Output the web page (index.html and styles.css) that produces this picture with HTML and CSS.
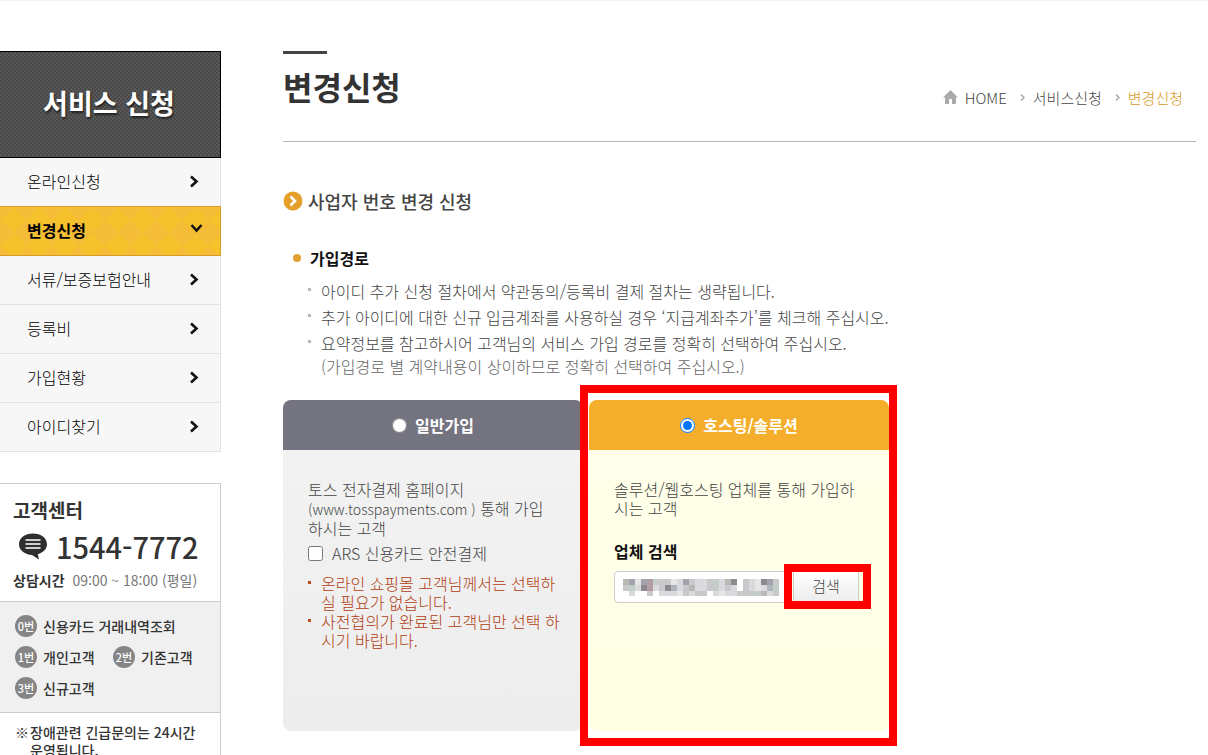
FILE: index.html
```html
<!DOCTYPE html>
<html lang="ko">
<head>
    <meta charset="UTF-8">
    <meta name="viewport" content="width=device-width, initial-scale=1.0">
    <title>변경신청</title>
    <link rel="stylesheet" href="styles.css">
</head>
<body>
    <div class="page">
        <aside class="sidebar">
            <h2 class="side-title">서비스 신청</h2>
            <nav>
                <ul class="side-menu">
                    <li><a href="#">온라인신청 <svg width="9" height="13" viewBox="0 0 9 13"><path d="M1 1.5L6.5 6.5L1 11.5"/></svg></a></li>
                    <li class="active"><a href="#">변경신청 <svg class="down" width="13" height="9" viewBox="0 0 13 9"><path d="M1.5 1L6.5 6.5L11.5 1"/></svg></a></li>
                    <li><a href="#">서류/보증보험안내 <svg width="9" height="13" viewBox="0 0 9 13"><path d="M1 1.5L6.5 6.5L1 11.5"/></svg></a></li>
                    <li><a href="#">등록비 <svg width="9" height="13" viewBox="0 0 9 13"><path d="M1 1.5L6.5 6.5L1 11.5"/></svg></a></li>
                    <li><a href="#">가입현황 <svg width="9" height="13" viewBox="0 0 9 13"><path d="M1 1.5L6.5 6.5L1 11.5"/></svg></a></li>
                    <li><a href="#">아이디찾기 <svg width="9" height="13" viewBox="0 0 9 13"><path d="M1 1.5L6.5 6.5L1 11.5"/></svg></a></li>
                </ul>
            </nav>

            <section class="center">
                <div class="center-top">
                    <h3>고객센터</h3>
                    <p class="tel">
                        <svg width="30" height="27" viewBox="0 0 30 27">
                            <path d="M15 0.5C7 0.5 1 5 1 11.3C1 17.5 7 21.8 14 22L21 26.5L19.8 21.2C25.4 19.6 29 16 29 11.3C29 5 23 0.5 15 0.5Z" fill="#2e2e2e"/>
                            <path d="M7.5 7H22.5M7.5 11H22.5M7.5 15H22.5" stroke="#fff" stroke-width="1.4"/>
                        </svg>
                        1544-7772
                    </p>
                    <p class="hours"><strong>상담시간</strong> 09:00 ~ 18:00 (평일)</p>
                </div>
                <ul class="center-numbers">
                    <li class="wide"><span class="num">0번</span>신용카드 거래내역조회</li>
                    <li><span class="num">1번</span>개인고객</li>
                    <li><span class="num">2번</span>기존고객</li>
                    <li><span class="num">3번</span>신규고객</li>
                </ul>
                <p class="center-note"><span>※</span><span>장애관련 긴급문의는 24시간<br>운영됩니다.</span></p>
            </section>
        </aside>

        <main class="content">
            <header class="content-header">
                <h1>변경신청</h1>
                <nav class="breadcrumb">
                    <svg width="15" height="14" viewBox="0 0 15 14"><path d="M7.5 0L15 7.5H13V14H9V9H6V14H2V7.5H0Z" fill="#aaa"/></svg>
                    <a href="#">HOME</a>
                    <svg class="sep" width="5" height="7" viewBox="0 0 5 7"><path d="M1 0.5L4 3.5L1 6.5"/></svg>
                    <a href="#">서비스신청</a>
                    <svg class="sep" width="5" height="7" viewBox="0 0 5 7"><path d="M1 0.5L4 3.5L1 6.5"/></svg>
                    <a href="#" class="current">변경신청</a>
                </nav>
            </header>

            <h2 class="section-title">
                <svg width="20" height="20" viewBox="0 0 20 20">
                    <circle cx="10" cy="10" r="9.5" fill="#e5a02c"/>
                    <path d="M7.5 5.5L12 10L7.5 14.5" fill="none" stroke="#fff" stroke-width="2.6"/>
                </svg>
                사업자 번호 변경 신청
            </h2>

            <h3 class="sub-title">가입경로</h3>
            <ul class="guide">
                <li>아이디 추가 신청 절차에서 약관동의/등록비 결제 절차는 생략됩니다.</li>
                <li>추가 아이디에 대한 신규 입금계좌를 사용하실 경우 ‘지급계좌추가’를 체크해 주십시오.</li>
                <li>요약정보를 참고하시어 고객님의 서비스 가입 경로를 정확히 선택하여 주십시오.
                    <small>(가입경로 별 계약내용이 상이하므로 정확히 선택하여 주십시오.)</small></li>
            </ul>

            <form class="routes">
                <section class="route">
                    <div class="route-head">
                        <input type="radio" name="route" id="route-normal">
                        <label for="route-normal">일반가입</label>
                    </div>
                    <div class="route-body">
                        <p>토스 전자결제 홈페이지<br><span class="url">(www.tosspayments.com )</span> 통해 가입<br>하시는 고객</p>
                        <div class="check">
                            <input type="checkbox" id="ars">
                            <label for="ars">ARS 신용카드 안전결제</label>
                        </div>
                        <ul class="warning">
                            <li>온라인 쇼핑몰 고객님께서는 선택하<br>실 필요가 없습니다.</li>
                            <li>사전협의가 완료된 고객님만 선택 하<br>시기 바랍니다.</li>
                        </ul>
                    </div>
                </section>

                <section class="route hosting">
                    <div class="route-head">
                        <input type="radio" name="route" id="route-hosting" checked>
                        <label for="route-hosting">호스팅/솔루션</label>
                    </div>
                    <div class="route-body">
                        <p>솔루션/웹호스팅 업체를 통해 가입하<br>시는 고객</p>
                        <label class="search-label" for="company">업체 검색</label>
                        <div class="search">
                            <div class="search-field">
                                <input type="text" id="company">
                                <!-- masked company name -->
                                <svg class="mask" width="156" height="17" viewBox="0 0 156 17" shape-rendering="crispEdges">
                                    <path fill="#bab7b5" d="M0 0h6v6h-6zM42 6h6v6h-6zM66 6h6v6h-6zM102 0h6v6h-6zM138 12h6v5h-6z"/>
                                    <path fill="#a4a2ad" d="M6 0h6v6h-6zM18 0h6v6h-6zM60 0h6v6h-6zM144 0h6v6h-6z"/>
                                    <path fill="#8c8a8f" d="M18 6h6v6h-6zM42 6h6v6h-6zM108 0h6v6h-6zM138 0h6v6h-6z"/>
                                    <path fill="#b29da2" d="M24 0h6v12h-6z"/>
                                    <path fill="#c9c8cb" d="M0 6h6v6h-6zM24 12h6v5h-6zM36 0h6v12h-6zM42 0h6v6h-6zM66 0h6v6h-6zM60 6h6v6h-6zM60 12h6v5h-6zM72 12h12v5h-12zM84 0h6v12h-6zM102 6h6v6h-6zM120 0h6v12h-6zM114 12h12v5h-12zM126 12h6v5h-6zM150 0h6v6h-6zM150 12h6v5h-6z"/>
                                    <path fill="#d9dadd" d="M6 12h6v5h-6zM12 6h6v6h-6zM30 6h6v6h-6zM36 12h6v5h-6zM42 12h12v5h-12zM54 0h6v12h-6zM66 12h6v5h-6zM72 0h12v12h-12zM96 0h6v12h-6zM90 12h6v5h-6zM102 12h12v5h-12zM108 6h6v6h-6zM126 0h6v12h-6zM138 6h6v6h-6zM144 12h6v5h-6z"/>
                                    <path fill="#c5cdc7" d="M6 6h6v6h-6zM30 0h6v6h-6zM90 0h6v12h-6zM132 12h6v5h-6zM150 6h6v6h-6z"/>
                                    <path fill="#e9e5e6" d="M12 0h6v6h-6zM48 0h6v6h-6zM54 12h6v5h-6zM96 12h6v5h-6zM132 0h6v12h-6z"/>
                                    <path fill="#aeb5bd" d="M48 6h6v6h-6zM144 6h6v6h-6z"/>
                                </svg>
                            </div>
                            <div class="search-action">
                                <button type="button">검색</button>
                                <span class="highlight highlight-button"></span>
                            </div>
                        </div>
                    </div>
                    <span class="highlight highlight-card"></span>
                </section>
            </form>
        </main>
    </div>
</body>
</html>
```

FILE: styles.css
```css
* {
    margin: 0;
    padding: 0;
    box-sizing: border-box;
}

body {
    font-family: "Noto Sans CJK KR", sans-serif;
    font-size: 16px;
    font-weight: 300;
    color: #444;
    background-color: #fff;
    border-top: 1px solid #f3f3f3;
}

ul {
    list-style: none;
}

a {
    color: inherit;
    text-decoration: none;
}

.page {
    display: flex;
    align-items: flex-start;
    gap: 62px;
    padding: 50px 12px 0 0;
}

/* sidebar */
.sidebar {
    flex: 0 0 221px;
}

.side-title {
    height: 107px;
    line-height: 102px;
    border: 1px solid #000;
    border-left: none;
    padding-right: 2px;
    text-align: center;
    font-size: 27px;
    font-weight: 700;
    color: #fff;
    text-shadow: 1px 2px 2px #222;
    background: conic-gradient(#585858 25%, #484848 0 50%, #585858 0 75%, #484848 0) 0 0 / 4px 4px;
}

.side-menu a {
    display: flex;
    justify-content: space-between;
    align-items: center;
    height: 49px;
    padding: 0 21px 2px 27px;
    border-right: 1px solid #e3e3e3;
    border-bottom: 1px solid #e3e3e3;
    color: #000;
    background-color: #f7f7f7;
}

.side-menu svg {
    fill: none;
    stroke: #111;
    stroke-width: 2.6;
}

.side-menu .down {
    margin: 0 -4px 4px 0;
}

.side-menu .active a {
    height: 50px;
    margin-top: -1px;
    border: 1px solid #dc9a2c;
    border-left: none;
    font-weight: 700;
    background-color: #f6c22b;
    background-image:
        linear-gradient(45deg, #f5bc38 25%, transparent 25% 75%, #f5bc38 75%),
        linear-gradient(135deg, #f5bc38 25%, transparent 25% 75%, #f5bc38 75%);
    background-size: 26px 26px;
}

.center {
    margin-top: 31px;
    border: 1px solid #ccc;
    border-left: none;
    color: #333;
    font-size: 14px;
    font-weight: 500;
}

.center-top {
    height: 118px;
    padding: 12px 0 0 13px;
    border-bottom: 1px solid #ccc;
}

.center-top h3 {
    font-size: 19px;
    line-height: 28px;
    font-weight: 700;
}

.tel {
    display: flex;
    align-items: center;
    gap: 8px;
    padding-left: 5px;
    font-size: 29px;
    line-height: 44px;
    white-space: nowrap;
}

.hours {
    line-height: 24px;
    font-weight: 400;
    color: #777;
    white-space: nowrap;
}

.hours strong {
    margin-right: 4px;
    font-weight: 700;
    color: #333;
}

.center-numbers {
    display: grid;
    grid-template-columns: 98px 1fr;
    row-gap: 9px;
    padding: 13px 0 13px 15px;
    border-bottom: 1px solid #ccc;
    background-color: #f0f0f0;
}

.center-numbers li {
    display: flex;
    align-items: center;
    gap: 6px;
    height: 22px;
}

.center-numbers .wide {
    grid-column: span 2;
}

.num {
    width: 22px;
    border-radius: 50%;
    text-align: center;
    font-size: 11px;
    line-height: 22px;
    color: #fff;
    background-color: #858585;
}

.center-note {
    display: flex;
    gap: 1px;
    padding: 10px 0 12px 15px;
    line-height: 18px;
}

/* content */
.content {
    flex: 1;
}

.content-header {
    display: flex;
    justify-content: space-between;
    align-items: center;
    height: 91px;
    border-bottom: 1px solid #b4b4b4;
}

.content-header h1 {
    align-self: flex-start;
    font-size: 32px;
    line-height: 64px;
    font-weight: 700;
    color: #333;
}

.content-header h1::before {
    content: "";
    display: block;
    width: 44px;
    height: 3px;
    background-color: #444;
}

.breadcrumb {
    display: flex;
    align-items: center;
    gap: 7px;
    padding: 2px 13px 0 0;
    font-size: 15px;
}

.breadcrumb .sep {
    margin: 0 1px 0 6px;
    fill: none;
    stroke: #aaa;
    stroke-width: 1.5;
}

.breadcrumb .current {
    color: #d69a1e;
}

.section-title {
    display: flex;
    align-items: center;
    gap: 5px;
    margin-top: 43px;
    font-size: 18px;
    line-height: 32px;
    font-weight: 500;
    color: #444;
}

.sub-title {
    display: flex;
    align-items: center;
    gap: 9px;
    margin: 28px 0 0 10px;
    font-size: 16px;
    line-height: 26px;
    color: #111;
}

.sub-title::before {
    content: "";
    width: 8px;
    height: 8px;
    border-radius: 50%;
    background-color: #e0a030;
}

.guide {
    margin: 7px 0 0 25px;
}

.guide li {
    padding-left: 13px;
    line-height: 26px;
    background: linear-gradient(#b5b5bd, #b5b5bd) 0 10px / 3px 3px no-repeat;
}

.guide small {
    display: block;
    font-size: 16px;
    line-height: 20px;
    color: #666;
}

.routes {
    display: grid;
    grid-template-columns: repeat(2, minmax(0, 1fr));
    gap: 6px;
    max-width: 606px;
    margin: 24px 0;
}

.route {
    position: relative;
    min-height: 331px;
    border-radius: 8px;
    background: linear-gradient(#f3f3f3, #ededed);
}

.route-head {
    display: flex;
    justify-content: center;
    align-items: center;
    gap: 8px;
    height: 50px;
    border-radius: 8px 8px 0 0;
    font-weight: 700;
    line-height: 24px;
    color: #fff;
    background-color: #747380;
}

.route-head input {
    width: 15px;
    height: 15px;
}

.route-body {
    padding: 30px 24px 0 25px;
    line-height: 19px;
    white-space: nowrap;
}

.url {
    font-size: 14px;
}

.check {
    display: flex;
    align-items: center;
    gap: 9px;
    margin-top: 6px;
}

.check input {
    width: 15px;
    height: 15px;
}

.warning {
    margin-top: 11px;
    color: #b03c10;
}

.warning li {
    padding-left: 13px;
    background: linear-gradient(#bd4a1c, #bd4a1c) 0 7px / 3px 3px no-repeat;
}

.hosting {
    background: linear-gradient(#ffffec, #fffee3);
}

.hosting .route-head {
    background-color: #f4ae2b;
}

.search-label {
    display: block;
    margin-top: 24px;
    font-weight: 700;
    color: #111;
}

.search {
    display: flex;
    gap: 4px;
    margin: 10px 6px 0 0;
}

.search-field {
    position: relative;
    flex: 1;
}

.search-field input {
    width: 100%;
    height: 32px;
    padding: 0 8px;
    border: 1px solid #ccc;
    border-radius: 4px;
    font: inherit;
}

.mask {
    position: absolute;
    top: 8px;
    left: 9px;
}

.search-action {
    position: relative;
}

.search-action button {
    width: 66px;
    height: 32px;
    padding-bottom: 4px;
    border: 1px solid #ccc;
    font: inherit;
    font-size: 15px;
    color: #444;
    background: linear-gradient(#fff, #ececec);
}

/* red marker boxes */
.highlight {
    position: absolute;
    border: 8px solid #f00;
    pointer-events: none;
}

.highlight-card {
    inset: -15px -8px -15px -9px;
}

.highlight-button {
    inset: -7px -12px -6px -9px;
}
```
